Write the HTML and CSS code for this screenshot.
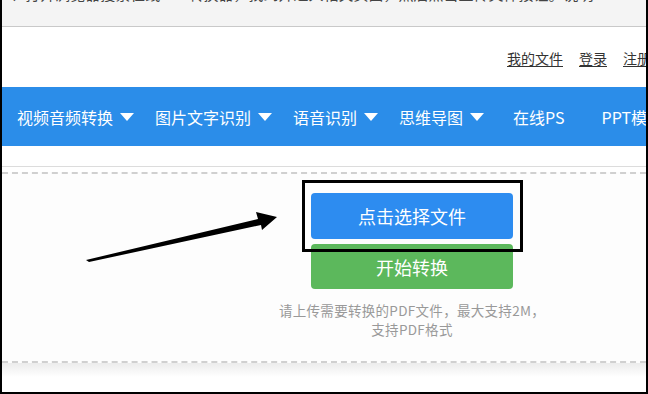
FILE: index.html
```html
<!DOCTYPE html>
<html lang="zh">
<head>
<meta charset="utf-8">
<link rel="stylesheet" href="styles.css">
</head>
<body>
<div class="frame">
  <div class="topbar"><span class="cut">1、打开浏览器搜索在线PDF转换器，找到并进入相关页面，然后点击上传文件按钮。说明</span></div>
  <div class="userbar">
    <a class="ulink">我的文件</a>
    <a class="ulink">登录</a>
    <a class="ulink">注册</a>
  </div>
  <nav class="nav">
    <span class="item">视频音频转换<i class="tri"></i></span>
    <span class="item">图片文字识别<i class="tri"></i></span>
    <span class="item">语音识别<i class="tri"></i></span>
    <span class="item">思维导图<i class="tri"></i></span>
    <span class="item plain">在线PS</span>
    <span class="item plain ppt">PPT模板</span>
  </nav>
  <div class="spacer"></div>
  <section class="upload">
    <div class="col">
      <button class="btn btn-blue">点击选择文件</button>
      <button class="btn btn-green">开始转换</button>
      <p class="hint">请上传需要转换的PDF文件，最大支持2M，<br>支持PDF格式</p>
    </div>
  </section>
  <div class="shadow"></div>
  <div class="mark"></div>
  <svg class="arrow" width="648" height="394" viewBox="0 0 648 394">
    <polygon points="86,260 258,219 256,212 277,217 262,230 261,225 89,262" fill="#000"/>
  </svg>
</div>
</body>
</html>
```
FILE: styles.css
```css
html, body {
  margin: 0;
  padding: 0;
}
body {
  width: 648px;
  height: 394px;
  overflow: hidden;
  background: #fff;
  font-family: "Noto Sans CJK SC", "Microsoft YaHei", sans-serif;
}
.frame {
  position: relative;
  width: 648px;
  height: 394px;
  box-sizing: border-box;
  border-left: 2px solid #000;
  border-right: 2px solid #000;
  border-bottom: 2px solid #000;
  overflow: hidden;
}
.topbar {
  height: 26px;
  background: #f4f4f4;
  border-bottom: 1px solid #c9c9c9;
  overflow: hidden;
  white-space: nowrap;
}
.cut {
  display: block;
  margin-top: -15px;
  font-size: 15px;
  line-height: 18px;
  color: #444;
}
.userbar {
  height: 60px;
  display: flex;
  align-items: center;
  gap: 16px;
  padding-left: 505px;
  padding-top: 2px;
  box-sizing: border-box;
  white-space: nowrap;
}
.ulink {
  font-size: 14px;
  color: #333;
  text-decoration: underline;
  text-underline-offset: 2px;
}
.nav {
  height: 59px;
  background: #2b8de9;
  display: flex;
  align-items: center;
  padding-left: 15px;
  white-space: nowrap;
  overflow: hidden;
}
.item {
  display: flex;
  align-items: center;
  color: #fff;
  font-size: 16px;
  margin-right: 21px;
  flex-shrink: 0;
}
.tri {
  display: inline-block;
  width: 0;
  height: 0;
  margin-left: 7px;
  border-left: 7px solid transparent;
  border-right: 7px solid transparent;
  border-top: 8px solid #fff;
}
.item.plain {
  margin-left: 8px;
}
.item.ppt {
  margin-left: 16px;
}
.spacer {
  height: 20px;
  border-bottom: 1px solid #dcdcdc;
}
.upload {
  margin-top: 5px;
  border-top: 2px dashed #d0d0d0;
  border-bottom: 2px dashed #d0d0d0;
  background: #fdfdfd;
  height: 191px;
  box-sizing: border-box;
}
.col {
  width: 202px;
  margin-left: 309px;
  padding-top: 19px;
  display: flex;
  flex-direction: column;
  align-items: center;
}
.btn {
  display: block;
  width: 202px;
  border: none;
  border-radius: 4px;
  color: #fff;
  font-family: "Noto Sans CJK SC", sans-serif;
  font-size: 18px;
  padding: 0;
}
.btn-blue {
  height: 46px;
  background: #2d8cf0;
}
.btn-green {
  height: 45px;
  margin-top: 5px;
  background: #5cb85c;
}
.hint {
  width: 320px;
  margin: 12px 0 0;
  text-align: center;
  font-size: 13.5px;
  letter-spacing: 0.3px;
  line-height: 19px;
  color: #999;
}
.shadow {
  height: 14px;
  background: linear-gradient(#ececec, #fff);
}
.mark {
  position: absolute;
  left: 300px;
  top: 180px;
  width: 215px;
  height: 66px;
  border: 3px solid #000;
}
.arrow {
  position: absolute;
  left: -2px;
  top: 0;
}
```
